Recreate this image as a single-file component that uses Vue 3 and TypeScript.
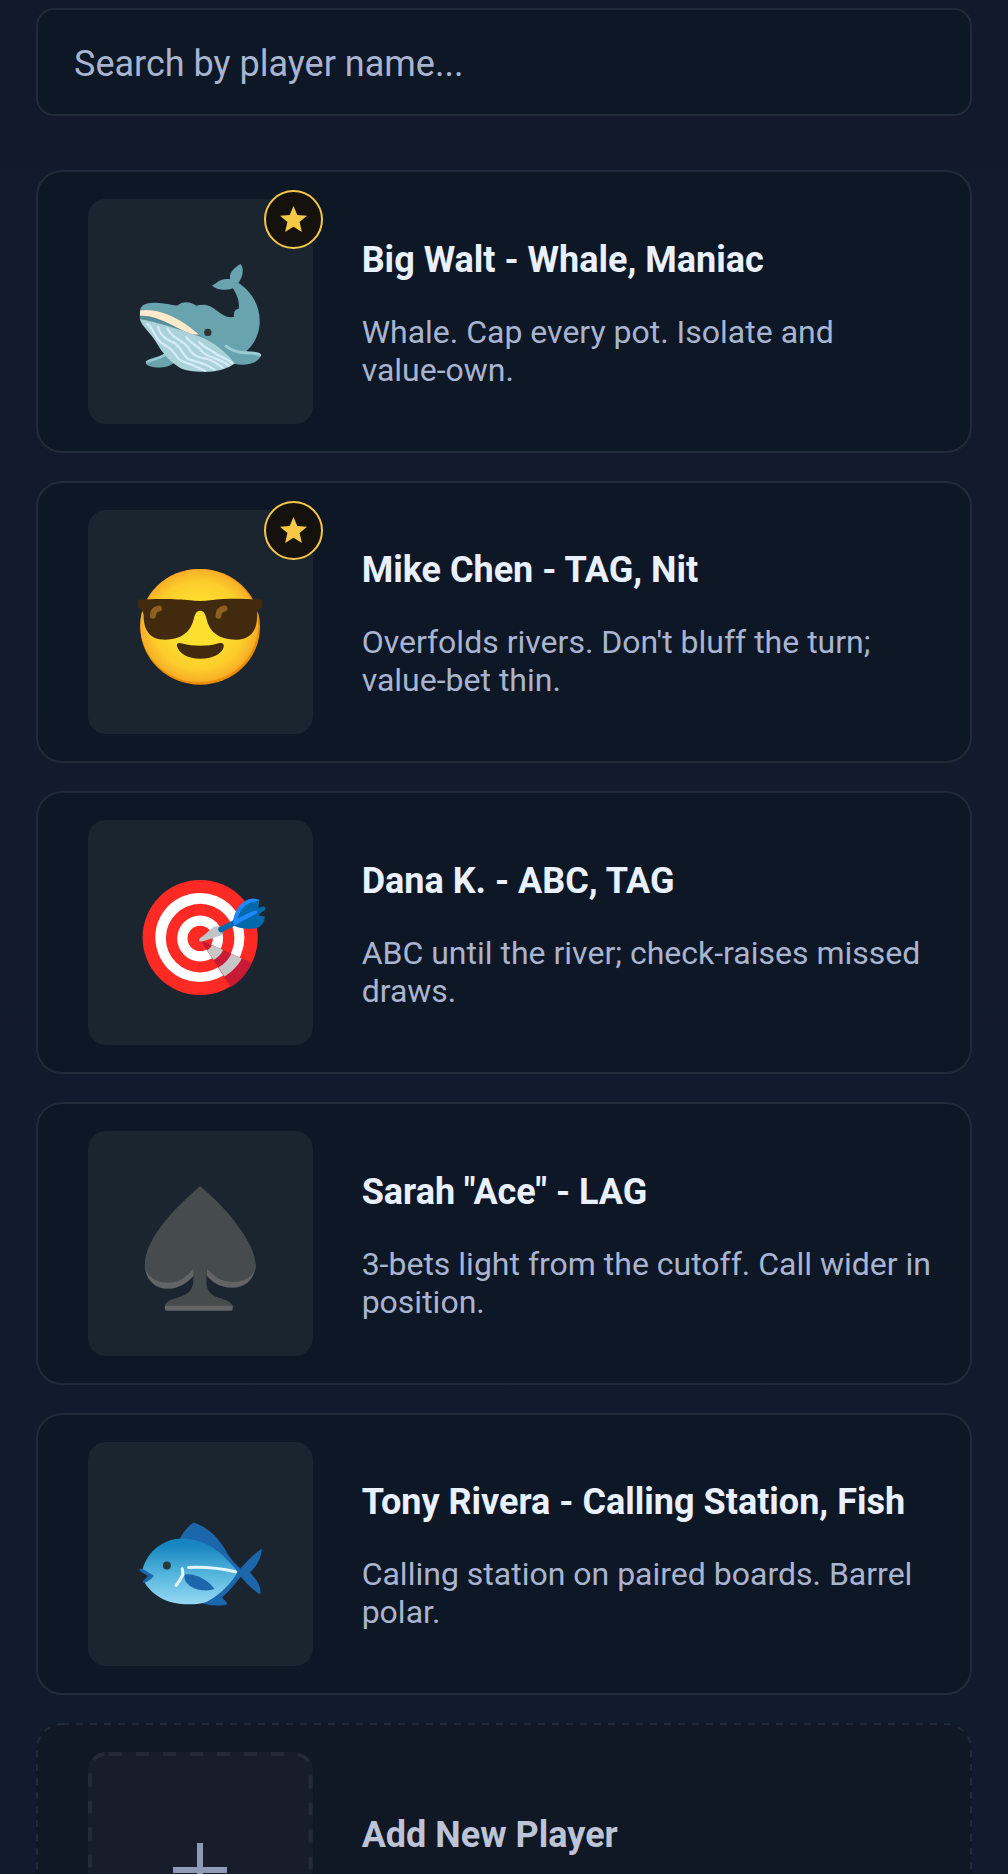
<script setup lang="ts">
import { computed, ref } from 'vue'

type Avatar = 'whale' | 'cool' | 'target' | 'spade' | 'fish'

interface Player {
  id: number
  title: string
  note: string
  avatar: Avatar
  starred: boolean
}

const players: Player[] = [
  { id: 1, title: 'Big Walt - Whale, Maniac', note: 'Whale. Cap every pot. Isolate and\nvalue-own.', avatar: 'whale', starred: true },
  { id: 2, title: 'Mike Chen - TAG, Nit', note: "Overfolds rivers. Don't bluff the turn; value-bet thin.", avatar: 'cool', starred: true },
  { id: 3, title: 'Dana K. - ABC, TAG', note: 'ABC until the river; check-raises missed draws.', avatar: 'target', starred: false },
  { id: 4, title: 'Sarah "Ace" - LAG', note: '3-bets light from the cutoff. Call wider in position.', avatar: 'spade', starred: false },
  { id: 5, title: 'Tony Rivera - Calling Station, Fish', note: 'Calling station on paired boards. Barrel polar.', avatar: 'fish', starred: false },
]

const query = ref('')
const visible = computed(() =>
  players.filter((p) => p.title.toLowerCase().includes(query.value.trim().toLowerCase())),
)
</script>

<template>
  <main class="screen">
    <input v-model="query" class="search" type="text" placeholder="Search by player name..." aria-label="Search by player name" />

    <ul class="list">
      <li v-for="p in visible" :key="p.id" class="card">
        <div class="tile">
          <svg v-if="p.avatar === 'whale'" class="art" viewBox="24 57 675 675" aria-hidden="true">
            <path fill="#68a3ae" d="M198 552C196 535 232 537 256 520L284 548C262 568 212 568 198 552Z" />
            <path fill="none" stroke="#9accd3" stroke-width="7" stroke-linecap="round" d="M202 546C222 539 238 537 254 526" />
            <path fill="#68a3ae" d="M180 394C182 376 196 368 228 369C255 370 275 376 292 377C308 364 330 363 350 378C375 369 396 379 412 393C428 407 443 415 463 411C461 399 465 388 477 387C480 364 471 342 459 325C438 333 410 331 396 317C410 313 418 294 451 298C447 278 463 264 482 252C496 266 487 296 476 309C517 338 540 376 540 425C540 465 520 497 499 515C520 518 540 516 544 526C538 550 502 560 463 552L375 560L235 490L180 418Z" />
            <path fill="#568f9a" d="M180 406C240 404 300 447 358 465L388 482C330 462 240 432 180 420Z" />
            <path fill="#a9d3d8" d="M180 418C225 424 320 455 362 471C404 488 444 522 465 551C440 570 400 577 370 576C340 576 314 572 300 564C270 545 248 520 235 497C215 460 185 440 180 418Z" />
            <g fill="none" stroke="#d5eafa" stroke-width="7" stroke-linecap="round">
              <path d="M203 432C222 450 226 476 245 490C265 501 276 509 288 526C302 552 326 547 346 560L376 573" />
              <path d="M235 442C240 468 260 478 280 488C304 498 306 526 326 538C352 548 378 548 404 570" />
              <path d="M263 446C276 476 306 480 322 500C338 526 352 534 374 536C400 540 412 553 428 563" />
              <path d="M320 472C332 492 356 498 366 514C380 534 426 536 447 558" />
              <path d="M358 487C370 502 390 509 404 519C422 534 440 534 458 550" />
            </g>
            <path fill="#ffe9cb" d="M180 408L181 392C215 386 258 398 300 422C330 440 346 455 358 465C326 465 300 445 265 430C235 416 208 406 180 408Z" />
            <path fill="none" stroke="#9accd3" stroke-width="9" stroke-linecap="round" d="M439 499C455 512 475 519 499 519C520 521 536 519 540 526" />
            <circle cx="384" cy="458" r="11" fill="#2f3637" />
          </svg>

          <svg v-else-if="p.avatar === 'cool'" class="art" viewBox="24 30 675 675" aria-hidden="true">
            <defs>
              <radialGradient id="face" cx="0.5" cy="0.5" r="0.52">
                <stop offset="0.4" stop-color="#fddf2f" />
                <stop offset="0.75" stop-color="#fccd2b" />
                <stop offset="1" stop-color="#f7a727" />
              </radialGradient>
            </defs>
            <ellipse cx="361" cy="381" rx="180" ry="174" fill="#eb8f00" />
            <ellipse cx="358" cy="377" rx="177" ry="170" fill="url(#face)" />
            <path fill="#412a0e" d="M174 300C235 295 300 298 330 301C350 304 372 304 392 301C430 297 490 295 548 300L547 322C538 330 532 332 532 345C533 390 515 420 468 420C420 420 388 398 380 357C376 340 370 333 361 333C352 333 346 340 342 357C333 398 302 420 256 420C208 420 191 390 191 345C190 332 183 330 175 322Z" />
            <g fill="none" stroke="#8c6120" stroke-width="18" stroke-linecap="round">
              <path d="M219 348C219 336 226 328 237 326" />
              <path d="M416 348C416 336 423 328 434 326" />
            </g>
            <path fill="#412a0e" d="M291 438C290 429 298 428 307 431C340 440 385 440 414 431C425 428 433 430 432 440C428 462 398 477 361 477C325 477 297 462 291 438Z" />
          </svg>

          <svg v-else-if="p.avatar === 'target'" class="art" viewBox="24 30 675 675" aria-hidden="true">
            <circle cx="361" cy="383" r="173" fill="#ff2a23" />
            <circle cx="360" cy="383" r="134" fill="#fff" />
            <circle cx="361" cy="385" r="103" fill="#ff2a23" />
            <circle cx="361" cy="386" r="69" fill="#fff" />
            <circle cx="361" cy="386" r="38" fill="#ff2a23" />
            <path fill="#c91a35" d="M361 390L516 459C502 491 481 516 453 532Z" />
            <path fill="#c6c6c6" d="M396 406L430 421C425 434 413 445 401 451L382 422C389 417 394 412 396 406Z" />
            <path fill="#c6c6c6" d="M455 432L486 446C474 470 455 487 434 500L416 473C433 463 447 449 455 432Z" />
            <path fill="#c2c5c7" d="M358 391C358 386 362 383 368 380L397 355C405 347 414 348 418 352L429 370C426 377 420 379 413 380L368 395C362 396 358 395 358 391Z" />
            <path fill="none" stroke="#858d93" stroke-width="5" d="M417 350L430 371" />
            <path fill="none" stroke="#0269ad" stroke-width="17" stroke-linecap="round" d="M424 359L470 336" />
            <path fill="#0269ad" d="M460 336C464 304 482 275 509 268C524 265 539 268 539 272L536 295C543 291 551 288 556 291C560 297 555 302 548 306C541 310 537 314 538 317L555 320C556 337 547 350 530 355C508 359 479 357 463 348Z" />
            <path fill="#2089ff" d="M460 337C464 304 482 275 509 268C524 265 539 268 539 273C505 276 484 290 473 326L519 304C532 300 538 305 530 311L464 347Z" />
          </svg>

          <svg v-else-if="p.avatar === 'spade'" class="art" viewBox="24 33 675 675" aria-hidden="true">
            <path fill="#626466" d="M195 435C195 480 225 507 264 507C300 507 328 484 342 468V444L380 444V466C394 486 420 504 456 504C500 504 528 475 528 432Z" />
            <path fill="#464c4e" d="M361 198C420 249 460 293 493 345C520 388 530 420 527 446C520 473 488 487 459 487C423 487 398 466 380 444V490C382 521 399 529 425 536C447 543 459 552 459 560H255C256 548 269 542 290 535C319 526 336 517 340 490L342 444C325 468 301 489 264 489C229 489 198 470 195 439C194 412 202 384 228 342C262 289 306 247 361 198Z" />
            <path fill="#626466" d="M255 558H459V568Q459 573 454 573H260Q255 573 255 568Z" />
          </svg>

          <svg v-else class="art" viewBox="24 33 675 675" aria-hidden="true">
            <defs>
              <linearGradient id="scales" x1="0" y1="0" x2="0" y2="1">
                <stop offset="0.1" stop-color="#1785c1" />
                <stop offset="0.55" stop-color="#55b6dd" />
                <stop offset="1" stop-color="#97d8f4" />
              </linearGradient>
            </defs>
            <path fill="#1c66ac" d="M299 325C310 304 324 287 338 277C342 274 350 278 356 281C395 298 420 328 436 356C451 383 464 397 482 413C499 394 520 372 543 355Q547 354 546 359C543 382 533 404 511 425C528 443 542 462 543 485Q542 490 538 489C518 476 500 458 483 438C465 462 445 483 427 500C433 507 441 512 442 519C438 527 400 526 370 519Z" />
            <path fill="url(#scales)" d="M188 416C204 360 252 322 310 323C388 327 432 371 474 423C456 456 421 493 381 513C350 525 302 522 266 512C230 500 208 477 194 456L215 436Z" />
            <path fill="#1c66ac" d="M179 414C187 412 198 420 221 434C222 438 216 444 197 455C190 458 186 454 191 449L204 436L182 422Q177 418 179 414Z" />
            <path fill="#1c66ac" d="M314 431C345 426 388 448 404 475C368 487 309 471 314 431Z" />
            <g fill="none" stroke="#e4f5ff" stroke-width="9" stroke-linecap="round">
              <path d="M326 410C375 408 425 413 467 423" />
              <path d="M307 414C309 422 309 430 309 432C303 444 296 455 289 464" />
            </g>
            <circle cx="261" cy="404" r="12" fill="#28383f" />
          </svg>

          <span v-if="p.starred" class="badge" role="img" aria-label="Favourite">
            <svg viewBox="0 0 24 24" aria-hidden="true">
              <path fill="#f6c945" d="M12 0L15.400 8.100L24 8.700L17.400 14.200L19.500 23L12 18.500L4.500 23L6.600 14.200L0 8.700L8.600 8.100Z" />
            </svg>
          </span>
        </div>
        <div class="body">
          <h2 class="title">{{ p.title }}</h2>
          <p class="note">{{ p.note }}</p>
        </div>
      </li>

      <li>
        <button class="card add" type="button">
          <svg class="outline" aria-hidden="true">
            <rect class="card-dash" x="1" y="1" rx="25" />
          </svg>
          <span class="tile add-tile">
            <svg class="outline" aria-hidden="true">
              <rect class="tile-dash" x="2" y="2" rx="16" />
            </svg>
            <svg class="plus" viewBox="0 0 54 54" aria-hidden="true">
              <path fill="none" stroke="#8f9ab7" stroke-width="6" d="M27 0V54M0 27H54" />
            </svg>
          </span>
          <span class="title add-title">Add New Player</span>
        </button>
      </li>
    </ul>
  </main>
</template>

<style>
body {
  margin: 0;
  background: #121a2c;
}
</style>

<style scoped>
.screen {
  box-sizing: border-box;
  height: 100vh;
  overflow-y: auto;
  scrollbar-width: none;
  padding: 8px 36px;
  background: linear-gradient(#13192c, #111b2d);
  font-family: Roboto, 'Liberation Sans', sans-serif;
}

.search {
  display: block;
  box-sizing: border-box;
  width: 100%;
  height: 108px;
  padding: 4px 36px 0;
  border: 2px solid #212a38;
  border-radius: 18px;
  outline: none;
  background: #0e1725;
  color: #e9f0ff;
  font: 36px Roboto, 'Liberation Sans', sans-serif;
}

.search::placeholder {
  color: #a9b4d0;
  opacity: 1;
}

.list {
  display: flex;
  flex-direction: column;
  gap: 28px;
  margin: 54px 0 0;
  padding: 0;
  list-style: none;
}

.card {
  display: flex;
  align-items: center;
  gap: 49px;
  box-sizing: border-box;
  width: 100%;
  padding: 27px 18px 27px 50px;
  border: 2px solid #212a38;
  border-radius: 26px;
  background: #0e1725;
}

.tile {
  position: relative;
  flex: none;
  box-sizing: border-box;
  width: 26%;
  aspect-ratio: 1;
  border-radius: 18px;
  background: #1b2530;
}

.art {
  display: block;
  width: 100%;
  height: 100%;
}

.badge {
  position: absolute;
  top: -9px;
  right: -10px;
  display: flex;
  align-items: center;
  justify-content: center;
  box-sizing: border-box;
  width: 59px;
  height: 59px;
  border: 2px solid #f6c945;
  border-radius: 50%;
  background: #15120d;
}

.badge svg {
  width: 27px;
  height: 27px;
}

.body {
  flex: 1;
  min-width: 0;
  padding-top: 1px;
}

.title {
  margin: 0;
  color: #e9f0ff;
  font-size: 36px;
  font-weight: 700;
  line-height: 50px;
}

.note {
  margin: 28px 0 0;
  color: #a9b4d0;
  font-size: 32px;
  line-height: 38px;
  white-space: pre-line;
}

.add {
  position: relative;
  padding: 29px 20px 29px 52px;
  border: 0;
  background: #101725;
  font-family: inherit;
  text-align: left;
}

.outline {
  position: absolute;
  top: 0;
  left: 0;
  width: 100%;
  height: 100%;
}

.card-dash {
  width: calc(100% - 2px);
  height: calc(100% - 2px);
  fill: none;
  stroke: #212938;
  stroke-width: 2px;
  stroke-dasharray: 7 7;
}

.tile-dash {
  width: calc(100% - 4px);
  height: calc(100% - 4px);
  fill: none;
  stroke: #232a38;
  stroke-width: 4px;
  stroke-dasharray: 13 14;
  stroke-dashoffset: -3px;
}

.add-tile {
  display: flex;
  align-items: center;
  justify-content: center;
  background: #171d2b;
}

.plus {
  width: 54px;
  height: 54px;
  margin-top: 12px;
}

.add-title {
  padding-bottom: 58px;
  color: #bcc4d6;
}
</style>
